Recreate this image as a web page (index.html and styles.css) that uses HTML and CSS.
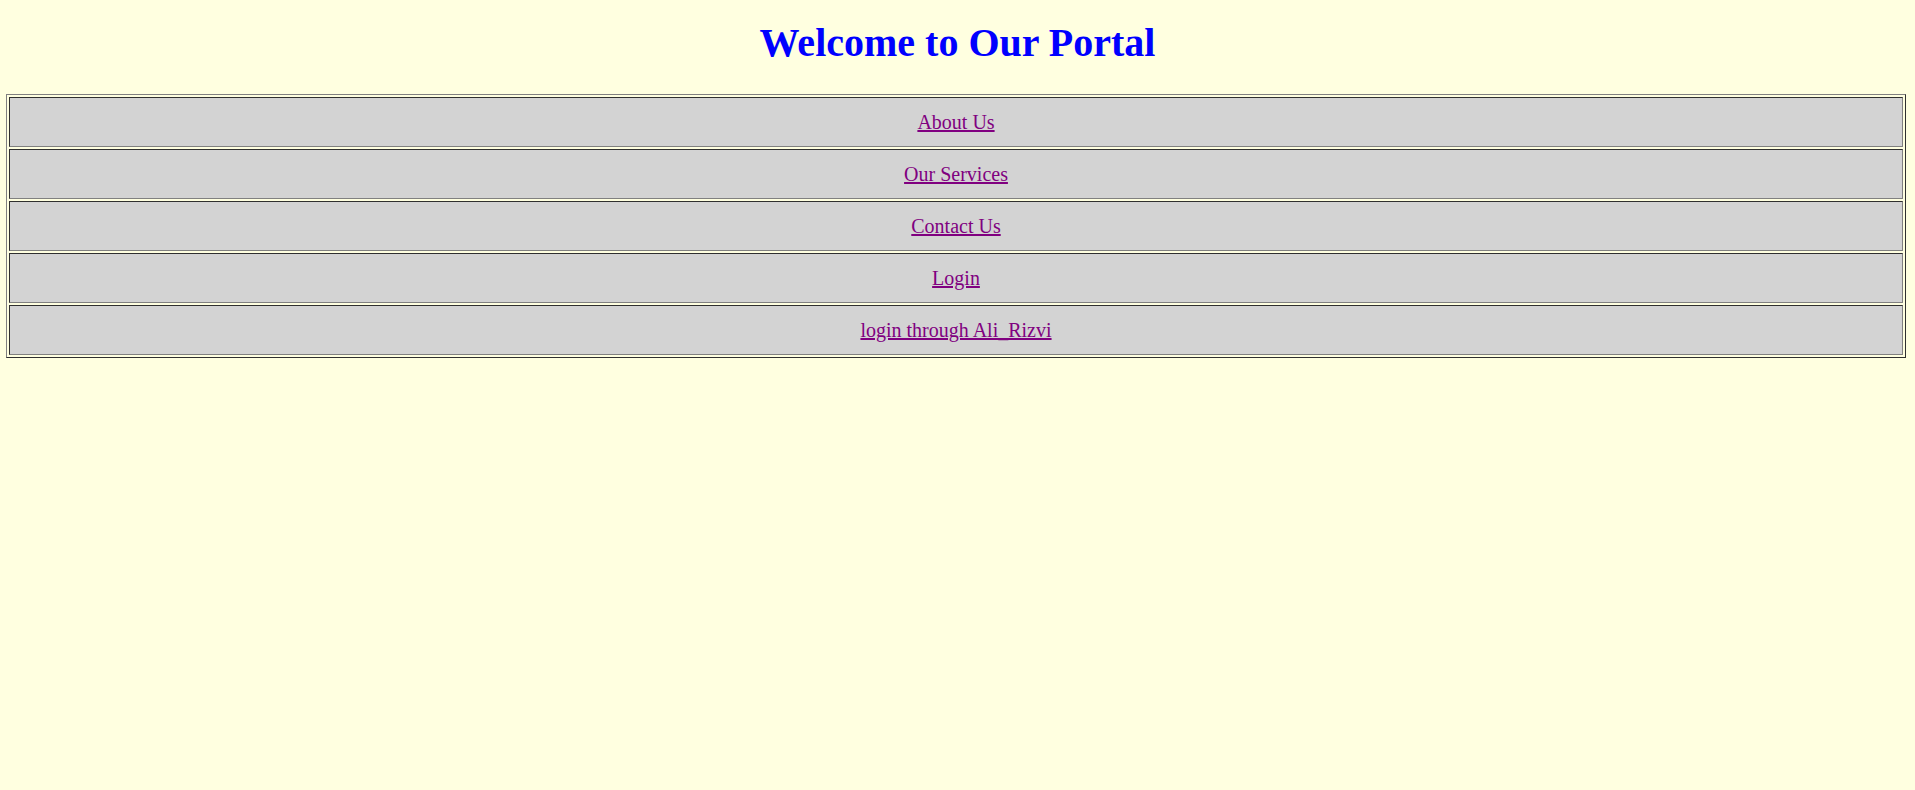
FILE: index.html
```html
<!DOCTYPE html>
<html>
<head>
<meta charset="utf-8">
<title>Welcome to Our Portal</title>
<link rel="stylesheet" href="styles.css">
</head>
<body>
<h1 class="title">Welcome to Our Portal</h1>
<table class="menu">
  <tr><td><a href="#">About Us</a></td></tr>
  <tr><td><a href="#">Our Services</a></td></tr>
  <tr><td><a href="#">Contact Us</a></td></tr>
  <tr><td><a href="#">Login</a></td></tr>
  <tr><td><a href="#">login through Ali_Rizvi</a></td></tr>
</table>
</body>
</html>
```
FILE: styles.css
```css
html, body {
  background: #ffffe0;
}
body {
  margin: 0 6px;
  padding: 0;
  font-family: "Liberation Serif", "Times New Roman", serif;
}
.title {
  margin: 0;
  padding: 20px 0 28px;
  font-size: 40px;
  line-height: 46px;
  font-weight: bold;
  color: #0000ff;
  text-align: center;
}
.menu {
  width: 1900px;
  border-collapse: separate;
  border-spacing: 2px;
  border: 1px solid;
  border-color: #808080 #2f2f2f #2f2f2f #808080;
}
.menu td {
  height: 48px;
  padding: 0;
  background: #d3d3d3;
  border: 1px solid;
  border-color: #2f2f2f #808080 #808080 #2f2f2f;
  text-align: center;
  vertical-align: middle;
  font-size: 20px;
  line-height: 23px;
}
.menu a {
  color: #800080;
  text-decoration: underline;
}
```
